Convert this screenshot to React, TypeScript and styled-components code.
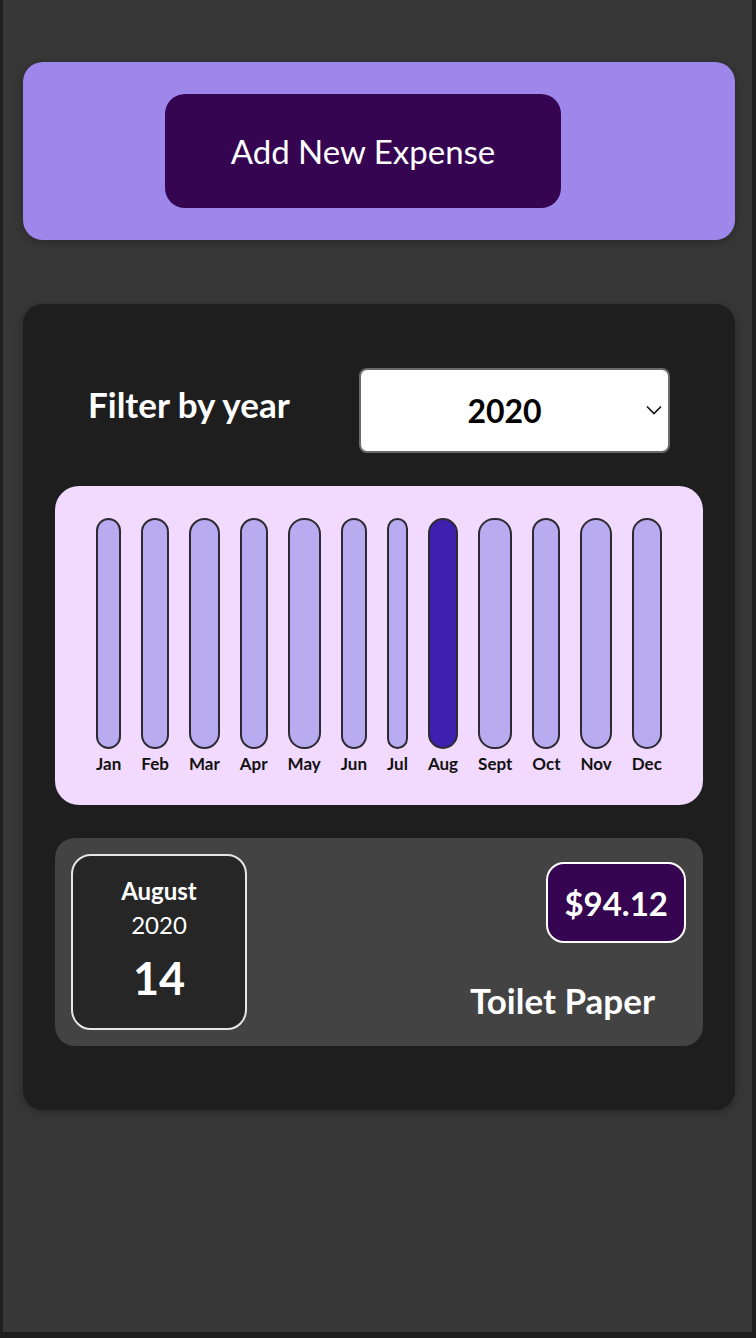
import styled, { createGlobalStyle } from 'styled-components';

const GlobalStyle = createGlobalStyle`
  html, body {
    margin: 0;
    padding: 0;
    background: #1f1f1f;
  }
  body {
    font-family: Lato, "Open Sans", sans-serif;
  }
  * {
    box-sizing: border-box;
  }
`;

const Page = styled.div`
  margin: 0 4px 0 3px;
  min-height: 1332px;
  background: #373737;
  padding: 62px 17px 0 20px;
  display: flex;
  flex-direction: column;
  gap: 64px;
`;

const NewExpensePanel = styled.div`
  height: 178px;
  background: #9e87ea;
  border-radius: 20px;
  box-shadow: 0 2px 10px rgba(0, 0, 0, 0.3);
  display: flex;
  align-items: center;
  justify-content: center;
  padding-right: 32px;
`;

const AddButton = styled.button`
  width: 396px;
  height: 114px;
  border: none;
  border-radius: 20px;
  background: #350552;
  color: #ffffff;
  font-family: inherit;
  font-size: 33px;
  cursor: pointer;
`;

const ExpensesPanel = styled.div`
  background: #1e1e1e;
  border-radius: 20px;
  box-shadow: 0 2px 10px rgba(0, 0, 0, 0.3);
  padding: 64px 32px;
  display: flex;
  flex-direction: column;
`;

const FilterRow = styled.div`
  display: flex;
  align-items: center;
  justify-content: space-between;
  padding: 0 33px;
  margin-bottom: 33px;
`;

const FilterLabel = styled.label`
  color: #ffffff;
  font-size: 35px;
  font-weight: 700;
  margin-top: -14px;
`;

const SelectWrap = styled.div`
  position: relative;
  width: 311px;
  height: 85px;
`;

const YearSelect = styled.select`
  appearance: none;
  width: 100%;
  height: 100%;
  border: 2px solid #6a6a6a;
  border-radius: 8px;
  background: #ffffff;
  color: #000000;
  font-family: inherit;
  font-size: 32px;
  font-weight: 700;
  text-align: center;
  text-align-last: center;
  padding: 0 28px 0 8px;
`;

const Chevron = styled.svg`
  position: absolute;
  right: 8px;
  top: 37px;
  pointer-events: none;
`;

const Chart = styled.div`
  background: #f1dafd;
  border-radius: 24px;
  height: 319px;
  padding: 32px 0 0;
  display: flex;
  justify-content: center;
  gap: 20px;
`;

const BarColumn = styled.div`
  display: flex;
  flex-direction: column;
  align-items: stretch;
  gap: 4px;
`;

const Bar = styled.div<{ $active: boolean }>`
  height: 231px;
  border: 2px solid #2e2a33;
  border-radius: 16px;
  background: ${(p) => (p.$active ? '#3d20ad' : '#b9abef')};
`;

const BarLabel = styled.span`
  font-size: 17px;
  font-weight: 700;
  color: #111111;
  text-align: center;
`;

const ExpenseItem = styled.div`
  margin-top: 33px;
  height: 208px;
  background: #434343;
  border-radius: 20px;
  padding: 16px 17px 16px 16px;
  display: flex;
  justify-content: space-between;
`;

const DateBox = styled.div`
  width: 176px;
  height: 176px;
  border: 2px solid #e6e6e6;
  border-radius: 20px;
  background: #262626;
  color: #ffffff;
  display: flex;
  flex-direction: column;
  align-items: center;
  padding-top: 19px;
`;

const DateMonth = styled.div`
  font-size: 24px;
  font-weight: 700;
  line-height: 32px;
`;

const DateYear = styled.div`
  font-size: 24px;
  line-height: 36px;
`;

const DateDay = styled.div`
  font-size: 45px;
  font-weight: 700;
  line-height: 60px;
  margin-top: 5px;
`;

const ExpenseInfo = styled.div`
  display: flex;
  flex-direction: column;
  align-items: flex-end;
  padding-top: 8px;
`;

const PriceBadge = styled.div`
  background: #350552;
  border: 2px solid #ffffff;
  border-radius: 18px;
  color: #ffffff;
  font-size: 33px;
  font-weight: 700;
  height: 81px;
  padding: 0 16px;
  display: flex;
  align-items: center;
`;

const ExpenseTitle = styled.h2`
  margin: 36px 31px 0 0;
  color: #ffffff;
  font-size: 35px;
  font-weight: 700;
`;

const months = [
  { name: 'Jan', active: false },
  { name: 'Feb', active: false },
  { name: 'Mar', active: false },
  { name: 'Apr', active: false },
  { name: 'May', active: false },
  { name: 'Jun', active: false },
  { name: 'Jul', active: false },
  { name: 'Aug', active: true },
  { name: 'Sept', active: false },
  { name: 'Oct', active: false },
  { name: 'Nov', active: false },
  { name: 'Dec', active: false },
];

export default function App(): JSX.Element {
  return (
    <>
      <GlobalStyle />
      <Page>
        <NewExpensePanel>
          <AddButton>Add New Expense</AddButton>
        </NewExpensePanel>

        <ExpensesPanel>
          <FilterRow>
            <FilterLabel>Filter by year</FilterLabel>
            <SelectWrap>
              <YearSelect defaultValue="2020">
                <option value="2022">2022</option>
                <option value="2021">2021</option>
                <option value="2020">2020</option>
                <option value="2019">2019</option>
              </YearSelect>
              <Chevron width="16" height="10" viewBox="0 0 16 10">
                <path d="M1 1.5 L8 8.5 L15 1.5" fill="none" stroke="#111" strokeWidth="1.6" />
              </Chevron>
            </SelectWrap>
          </FilterRow>

          <Chart>
            {months.map((m) => (
              <BarColumn key={m.name}>
                <Bar $active={m.active} />
                <BarLabel>{m.name}</BarLabel>
              </BarColumn>
            ))}
          </Chart>

          <ExpenseItem>
            <DateBox>
              <DateMonth>August</DateMonth>
              <DateYear>2020</DateYear>
              <DateDay>14</DateDay>
            </DateBox>
            <ExpenseInfo>
              <PriceBadge>$94.12</PriceBadge>
              <ExpenseTitle>Toilet Paper</ExpenseTitle>
            </ExpenseInfo>
          </ExpenseItem>
        </ExpensesPanel>
      </Page>
    </>
  );
}
